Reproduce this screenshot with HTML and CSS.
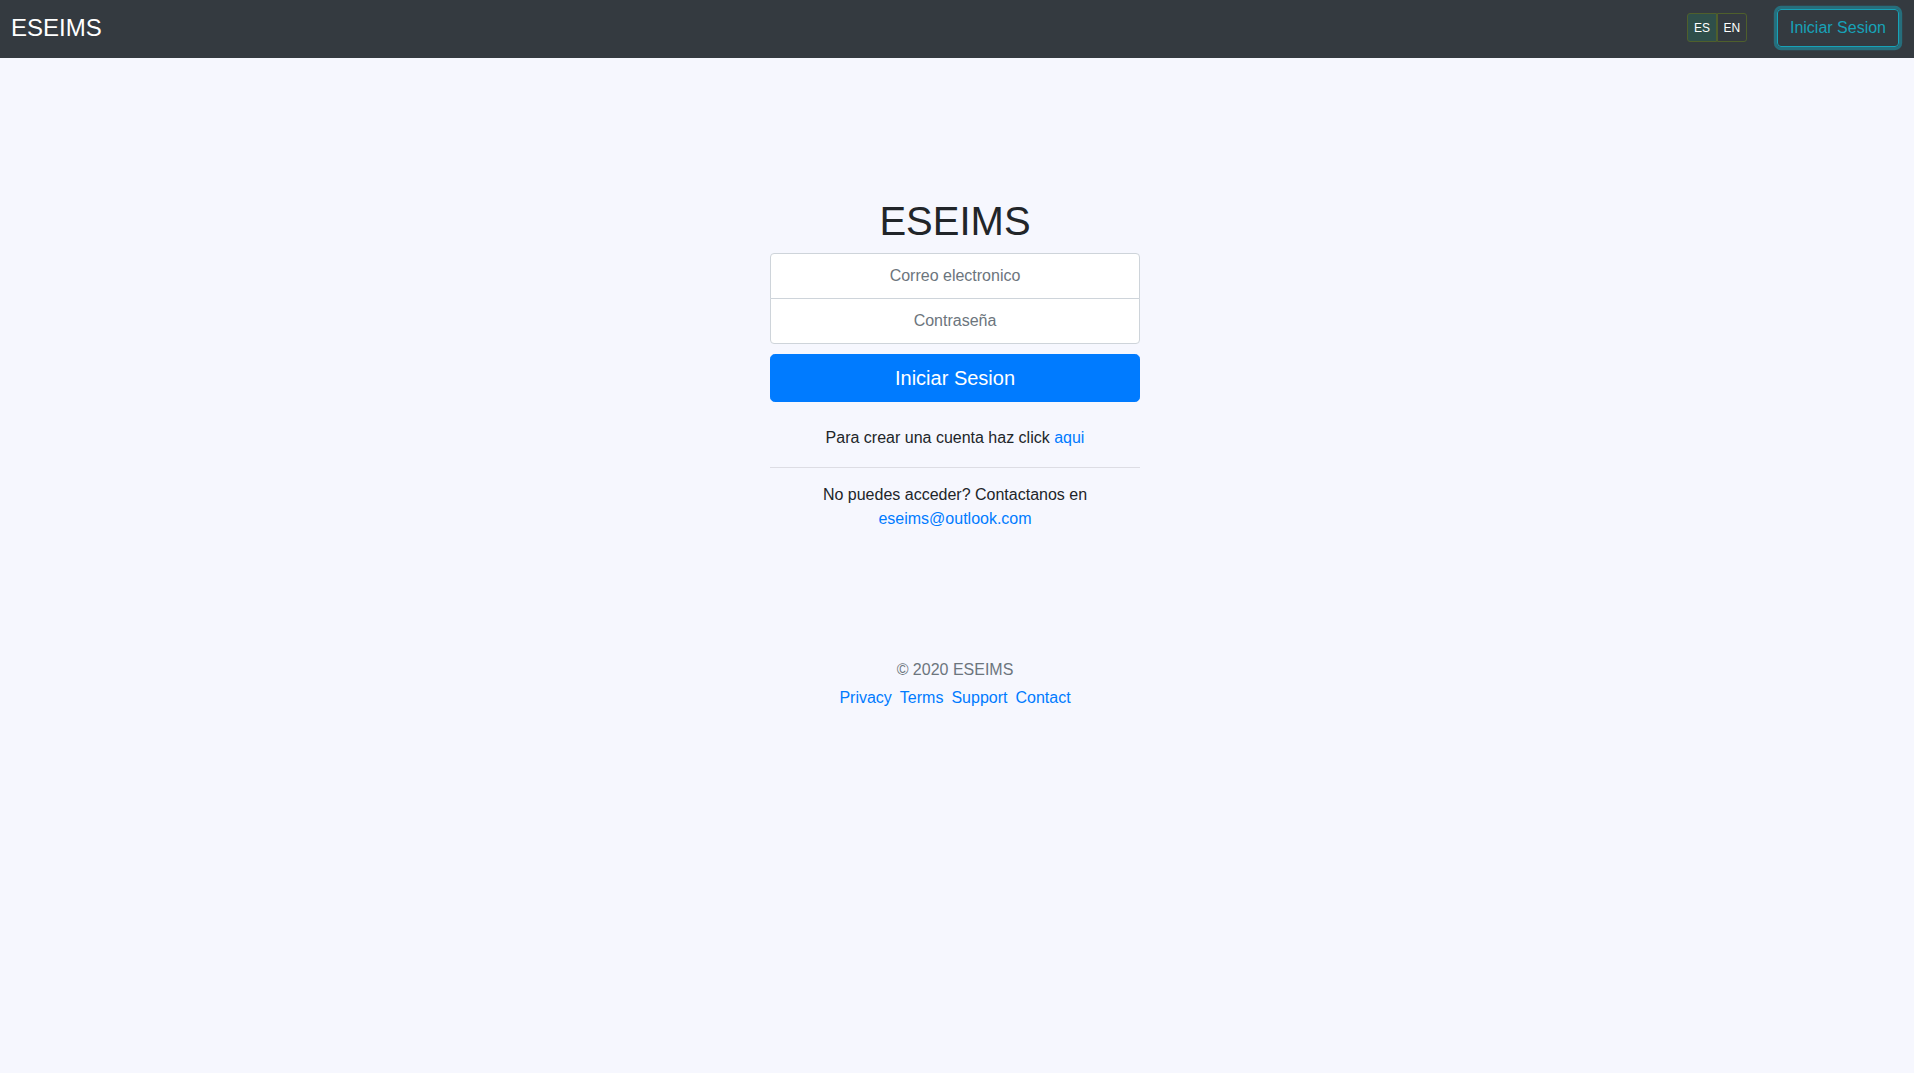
FILE: index.html
```html
<!DOCTYPE html>
<html lang="es">
<head>
<meta charset="utf-8">
<title>ESEIMS</title>
<link rel="stylesheet" href="styles.css">
</head>
<body>
<header class="navbar">
  <a class="brand" href="#">ESEIMS</a>
  <div class="nav-right">
    <div class="lang-group">
      <button class="lang lang-active">ES</button>
      <button class="lang">EN</button>
    </div>
    <button class="btn-login">Iniciar Sesion</button>
  </div>
</header>
<main class="main">
  <div class="signin">
    <h1 class="title">ESEIMS</h1>
    <form class="form">
      <input class="field field-top" type="email" placeholder="Correo electronico">
      <input class="field field-bottom" type="password" placeholder="Contraseña">
      <button class="btn-primary" type="button">Iniciar Sesion</button>
    </form>
    <p class="create">Para crear una cuenta haz click <a href="#">aqui</a></p>
    <hr class="divider">
    <p class="contact">No puedes acceder? Contactanos en<br><a href="#">eseims@outlook.com</a></p>
  </div>
  <footer class="footer">
    <p class="copy">© 2020 ESEIMS</p>
    <ul class="links">
      <li><a href="#">Privacy</a></li>
      <li><a href="#">Terms</a></li>
      <li><a href="#">Support</a></li>
      <li><a href="#">Contact</a></li>
    </ul>
  </footer>
</main>
</body>
</html>
```
FILE: styles.css
```css
* { box-sizing: border-box; }
html, body { margin: 0; padding: 0; }
body {
  background: #f6f7fe;
  font-family: "Liberation Sans", Arial, sans-serif;
  font-size: 16px;
  line-height: 1.5;
  color: #212529;
  min-height: 1073px;
}
a { color: #007bff; text-decoration: none; }

.navbar {
  height: 58px;
  background: #343a40;
  display: flex;
  align-items: center;
  justify-content: space-between;
  padding: 0 15px 3px 11px;
}
.brand {
  color: #fff;
  font-size: 24px;
  line-height: 36px;
  padding-top: 1px;
}
.nav-right { display: flex; align-items: center; }
.lang-group { display: flex; margin-right: 30px; }
.lang {
  font-family: "Liberation Sans", Arial, sans-serif;
  font-size: 12px;
  line-height: 18px;
  height: 29px;
  width: 30px;
  padding: 0;
  color: #fff;
  background: transparent;
  border: 1px solid #4f5f2c;
  border-radius: 3px;
  cursor: pointer;
}
.lang-active {
  background: #2f4f4a;
  border-top-right-radius: 0;
  border-bottom-right-radius: 0;
}
.lang + .lang {
  margin-left: 0;
  border-top-left-radius: 0;
  border-bottom-left-radius: 0;
}
.btn-login {
  font-family: "Liberation Sans", Arial, sans-serif;
  font-size: 16px;
  line-height: 24px;
  padding: 6px 12px;
  color: #17a2b8;
  background: transparent;
  border: 1px solid #17a2b8;
  border-radius: 4px;
  box-shadow: 0 0 0 3.2px rgba(23, 162, 184, 0.5);
}

.main {
  padding: 139px 4px 0 0;
  display: flex;
  flex-direction: column;
  align-items: center;
  text-align: center;
}
.signin { width: 370px; }
.title {
  margin: 0 0 8px;
  font-size: 40px;
  line-height: 48px;
  font-weight: 400;
  color: #212529;
}
.form { display: flex; flex-direction: column; }
.field {
  height: 46px;
  padding: 10px;
  font-family: "Liberation Sans", Arial, sans-serif;
  font-size: 16px;
  line-height: 24px;
  text-align: center;
  color: #495057;
  background: #fff;
  border: 1px solid #ced4da;
}
.field::placeholder { color: #6c757d; opacity: 1; }
.field-top { border-radius: 4px 4px 0 0; }
.field-bottom { border-radius: 0 0 4px 4px; margin-top: -1px; }
.btn-primary {
  margin-top: 10px;
  height: 48px;
  font-family: "Liberation Sans", Arial, sans-serif;
  font-size: 20px;
  line-height: 30px;
  color: #fff;
  background: #007bff;
  border: 1px solid #007bff;
  border-radius: 4.8px;
}
.create { margin: 24px 0 0; }
.divider {
  margin: 17px 0 15px;
  border: 0;
  border-top: 1px solid rgba(0, 0, 0, 0.1);
}
.contact { margin: 0; }

.footer { margin-top: 127px; }
.copy { margin: 0 0 4px; color: #6c757d; }
.links {
  list-style: none;
  margin: 0;
  padding: 0;
  display: flex;
  justify-content: center;
  gap: 8px;
}
```
